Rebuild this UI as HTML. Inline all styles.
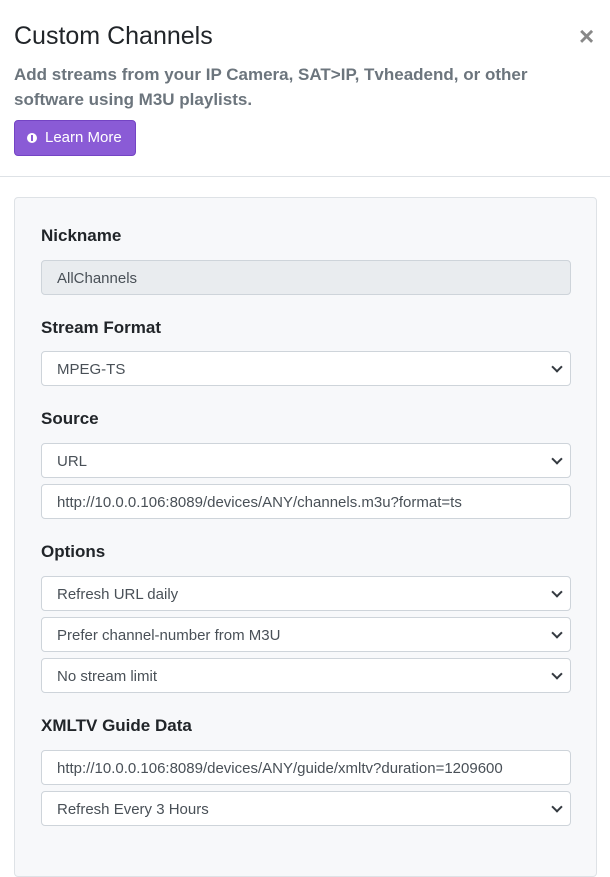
<!DOCTYPE html>
<html><head><style>
*{box-sizing:border-box;margin:0;padding:0}
body{width:610px;height:858px;overflow:hidden;background:#fff;font-family:"Liberation Sans",sans-serif;position:relative;color:#212529}
h1{position:absolute;left:14px;top:22px;font-size:25px;font-weight:400;color:#212529}
.x{position:absolute;left:579px;top:21px;font-size:26px;color:#888;font-weight:700}
.sub{position:absolute;left:14px;top:62px;width:560px;font-size:17px;line-height:25px;color:#6c757d;font-weight:700}
.btn{position:absolute;left:14px;top:120px;width:122px;height:36px;background:#8a5bd6;border:1px solid #7444c4;border-radius:4px;color:#fff;font-size:15px;line-height:34px;padding-left:30px}
.btn i{position:absolute;left:12px;top:12px;width:10px;height:10px;border-radius:50%;background:#fff}
.btn i:after{content:"";position:absolute;left:4px;top:2px;width:2px;height:6px;background:#8a5bd6}
.hr{position:absolute;left:0;top:176px;width:610px;height:1px;background:#dee2e6}
.panel{position:absolute;left:14px;top:197px;width:583px;height:680px;background:#f7f8fa;border:1px solid #dee2e6;border-radius:4px}
.l{position:absolute;left:41px;font-size:17px;font-weight:700;color:#212529}
.f{position:absolute;left:41px;width:530px;height:35px;background:#fff;border:1px solid #ced4da;border-radius:4px;font-size:15px;color:#495057;line-height:35px;padding-left:15px}
.f.d{background:#e9ecef}
.s:after{content:"";position:absolute;right:9px;top:11px;width:6px;height:6px;border-right:2px solid #343a40;border-bottom:2px solid #343a40;transform:rotate(45deg)}
</style></head><body>
<h1>Custom Channels</h1>
<div class="x">×</div>
<div class="sub">Add streams from your IP Camera, SAT&gt;IP, Tvheadend, or other software using M3U playlists.</div>
<div class="btn"><i></i>Learn More</div>
<div class="hr"></div>
<div class="panel"></div>
<div class="l" style="top:226px">Nickname</div>
<div class="f d" style="top:260px">AllChannels</div>
<div class="l" style="top:318px">Stream Format</div>
<div class="f s" style="top:351px">MPEG-TS</div>
<div class="l" style="top:409px">Source</div>
<div class="f s" style="top:443px">URL</div>
<div class="f" style="top:484px">http://10.0.0.106:8089/devices/ANY/channels.m3u?format=ts</div>
<div class="l" style="top:542px">Options</div>
<div class="f s" style="top:576px">Refresh URL daily</div>
<div class="f s" style="top:617px">Prefer channel-number from M3U</div>
<div class="f s" style="top:658px">No stream limit</div>
<div class="l" style="top:716px">XMLTV Guide Data</div>
<div class="f" style="top:750px">http://10.0.0.106:8089/devices/ANY/guide/xmltv?duration=1209600</div>
<div class="f s" style="top:791px">Refresh Every 3 Hours</div>
</body></html>
